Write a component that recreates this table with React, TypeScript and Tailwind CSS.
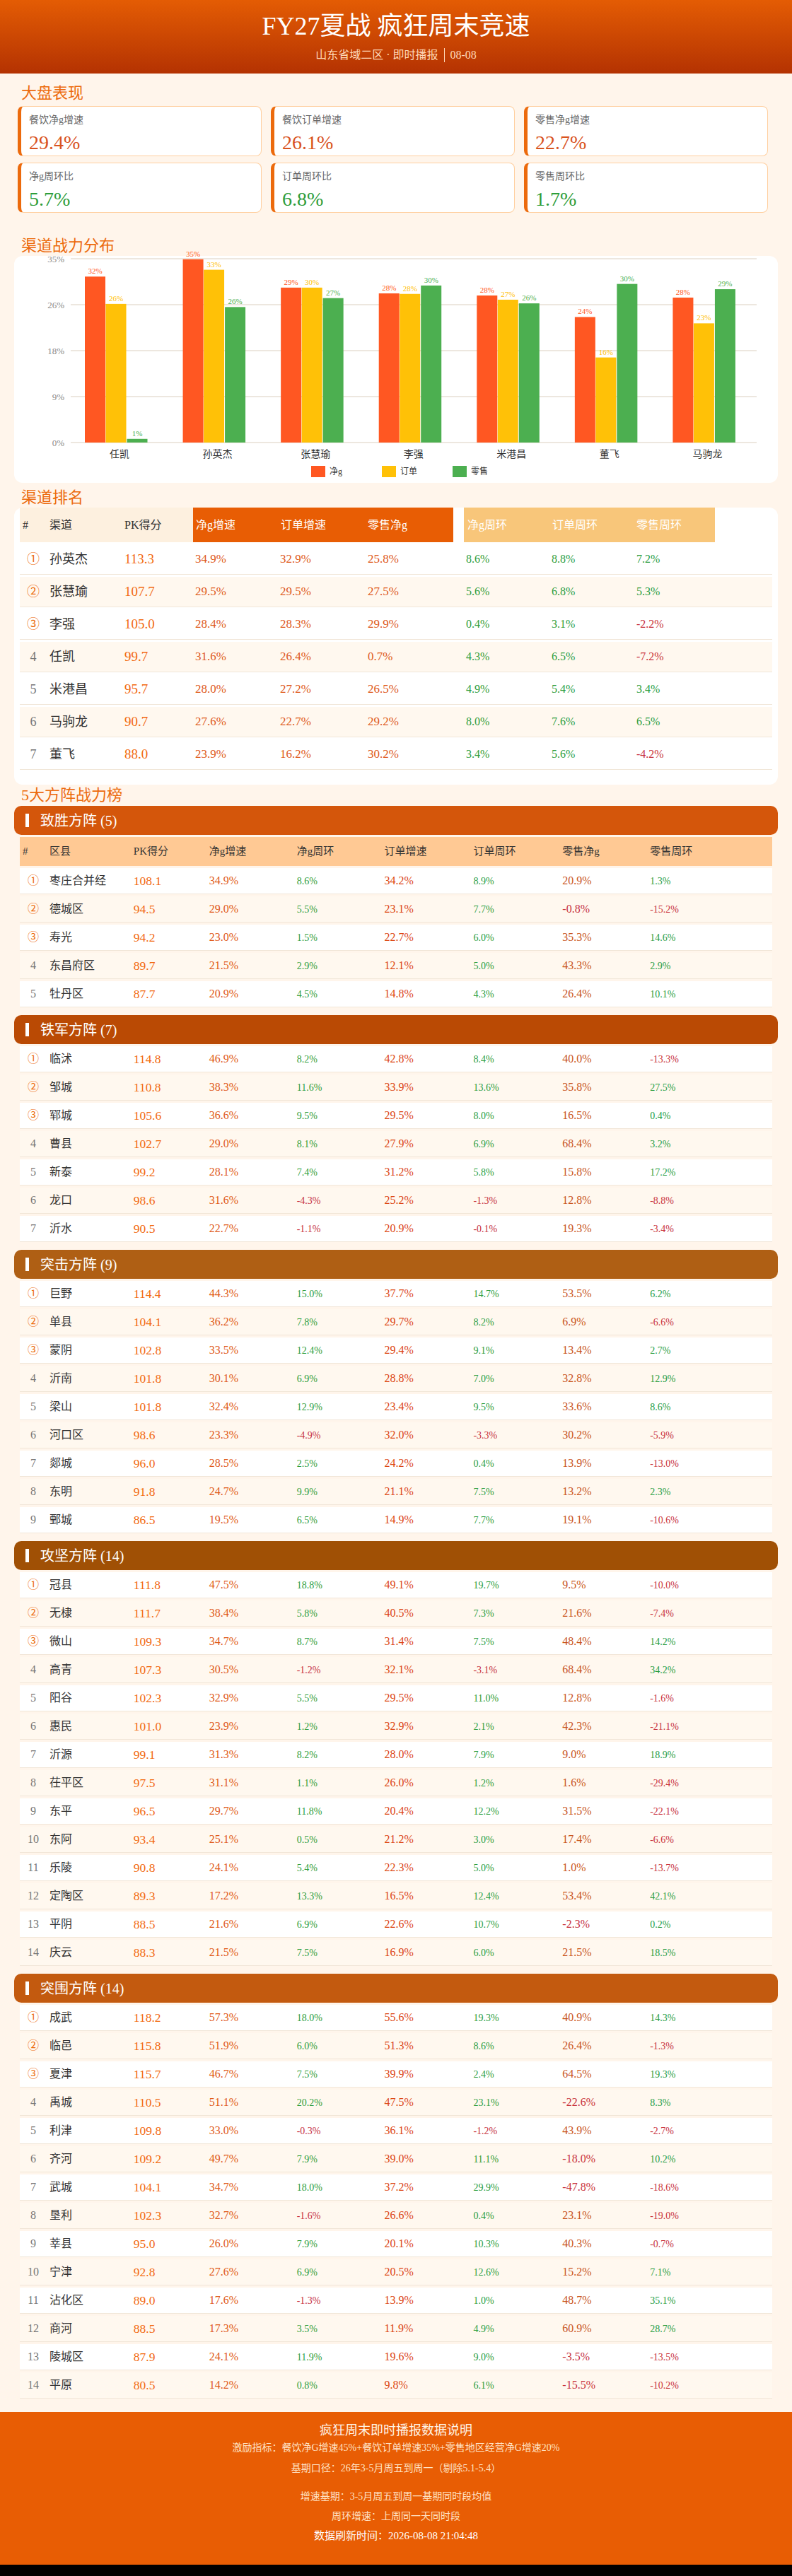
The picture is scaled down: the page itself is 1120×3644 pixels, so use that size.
import React from "react";

type SRow = [string, number, number, number, number, number, number, number];

const pct = (v: number) => `${v.toFixed(1)}%`;

const kpis: { label: string; value: string; green?: boolean }[] = [
  { label: "餐饮净g增速", value: "29.4%" },
  { label: "餐饮订单增速", value: "26.1%" },
  { label: "零售净g增速", value: "22.7%" },
  { label: "净g周环比", value: "5.7%", green: true },
  { label: "订单周环比", value: "6.8%", green: true },
  { label: "零售周环比", value: "1.7%", green: true },
];

const chartData: { name: string; v: number[]; l: string[] }[] = [
  { name: "任凯", v: [31.6, 26.4, 0.7], l: ["32%", "26%", "1%"] },
  { name: "孙英杰", v: [34.9, 32.9, 25.8], l: ["35%", "33%", "26%"] },
  { name: "张慧瑜", v: [29.5, 29.5, 27.5], l: ["29%", "30%", "27%"] },
  { name: "李强", v: [28.4, 28.3, 29.9], l: ["28%", "28%", "30%"] },
  { name: "米港昌", v: [28.0, 27.2, 26.5], l: ["28%", "27%", "26%"] },
  { name: "董飞", v: [23.9, 16.2, 30.2], l: ["24%", "16%", "30%"] },
  { name: "马驹龙", v: [27.6, 22.7, 29.2], l: ["28%", "23%", "29%"] },
];

const ranking: [string, number, number, number, number, number, number, number][] = [
  ["孙英杰", 113.3, 34.9, 32.9, 25.8, 8.6, 8.8, 7.2],
  ["张慧瑜", 107.7, 29.5, 29.5, 27.5, 5.6, 6.8, 5.3],
  ["李强", 105.0, 28.4, 28.3, 29.9, 0.4, 3.1, -2.2],
  ["任凯", 99.7, 31.6, 26.4, 0.7, 4.3, 6.5, -7.2],
  ["米港昌", 95.7, 28.0, 27.2, 26.5, 4.9, 5.4, 3.4],
  ["马驹龙", 90.7, 27.6, 22.7, 29.2, 8.0, 7.6, 6.5],
  ["董飞", 88.0, 23.9, 16.2, 30.2, 3.4, 5.6, -4.2],
];

const sections: { title: string; color: string; rows: SRow[] }[] = [
  {
    title: "致胜方阵 (5)",
    color: "bg-[#d4560b]",
    rows: [
      ["枣庄合并经", 108.1, 34.9, 8.6, 34.2, 8.9, 20.9, 1.3],
      ["德城区", 94.5, 29.0, 5.5, 23.1, 7.7, -0.8, -15.2],
      ["寿光", 94.2, 23.0, 1.5, 22.7, 6.0, 35.3, 14.6],
      ["东昌府区", 89.7, 21.5, 2.9, 12.1, 5.0, 43.3, 2.9],
      ["牡丹区", 87.7, 20.9, 4.5, 14.8, 4.3, 26.4, 10.1],
    ],
  },
  {
    title: "铁军方阵 (7)",
    color: "bg-[#ba4a04]",
    rows: [
      ["临沭", 114.8, 46.9, 8.2, 42.8, 8.4, 40.0, -13.3],
      ["邹城", 110.8, 38.3, 11.6, 33.9, 13.6, 35.8, 27.5],
      ["郓城", 105.6, 36.6, 9.5, 29.5, 8.0, 16.5, 0.4],
      ["曹县", 102.7, 29.0, 8.1, 27.9, 6.9, 68.4, 3.2],
      ["新泰", 99.2, 28.1, 7.4, 31.2, 5.8, 15.8, 17.2],
      ["龙口", 98.6, 31.6, -4.3, 25.2, -1.3, 12.8, -8.8],
      ["沂水", 90.5, 22.7, -1.1, 20.9, -0.1, 19.3, -3.4],
    ],
  },
  {
    title: "突击方阵 (9)",
    color: "bg-[#af5f14]",
    rows: [
      ["巨野", 114.4, 44.3, 15.0, 37.7, 14.7, 53.5, 6.2],
      ["单县", 104.1, 36.2, 7.8, 29.7, 8.2, 6.9, -6.6],
      ["蒙阴", 102.8, 33.5, 12.4, 29.4, 9.1, 13.4, 2.7],
      ["沂南", 101.8, 30.1, 6.9, 28.8, 7.0, 32.8, 12.9],
      ["梁山", 101.8, 32.4, 12.9, 23.4, 9.5, 33.6, 8.6],
      ["河口区", 98.6, 23.3, -4.9, 32.0, -3.3, 30.2, -5.9],
      ["郯城", 96.0, 28.5, 2.5, 24.2, 0.4, 13.9, -13.0],
      ["东明", 91.8, 24.7, 9.9, 21.1, 7.5, 13.2, 2.3],
      ["鄄城", 86.5, 19.5, 6.5, 14.9, 7.7, 19.1, -10.6],
    ],
  },
  {
    title: "攻坚方阵 (14)",
    color: "bg-[#a05005]",
    rows: [
      ["冠县", 111.8, 47.5, 18.8, 49.1, 19.7, 9.5, -10.0],
      ["无棣", 111.7, 38.4, 5.8, 40.5, 7.3, 21.6, -7.4],
      ["微山", 109.3, 34.7, 8.7, 31.4, 7.5, 48.4, 14.2],
      ["高青", 107.3, 30.5, -1.2, 32.1, -3.1, 68.4, 34.2],
      ["阳谷", 102.3, 32.9, 5.5, 29.5, 11.0, 12.8, -1.6],
      ["惠民", 101.0, 23.9, 1.2, 32.9, 2.1, 42.3, -21.1],
      ["沂源", 99.1, 31.3, 8.2, 28.0, 7.9, 9.0, 18.9],
      ["茌平区", 97.5, 31.1, 1.1, 26.0, 1.2, 1.6, -29.4],
      ["东平", 96.5, 29.7, 11.8, 20.4, 12.2, 31.5, -22.1],
      ["东阿", 93.4, 25.1, 0.5, 21.2, 3.0, 17.4, -6.6],
      ["乐陵", 90.8, 24.1, 5.4, 22.3, 5.0, 1.0, -13.7],
      ["定陶区", 89.3, 17.2, 13.3, 16.5, 12.4, 53.4, 42.1],
      ["平阴", 88.5, 21.6, 6.9, 22.6, 10.7, -2.3, 0.2],
      ["庆云", 88.3, 21.5, 7.5, 16.9, 6.0, 21.5, 18.5],
    ],
  },
  {
    title: "突围方阵 (14)",
    color: "bg-[#c35a0f]",
    rows: [
      ["成武", 118.2, 57.3, 18.0, 55.6, 19.3, 40.9, 14.3],
      ["临邑", 115.8, 51.9, 6.0, 51.3, 8.6, 26.4, -1.3],
      ["夏津", 115.7, 46.7, 7.5, 39.9, 2.4, 64.5, 19.3],
      ["禹城", 110.5, 51.1, 20.2, 47.5, 23.1, -22.6, 8.3],
      ["利津", 109.8, 33.0, -0.3, 36.1, -1.2, 43.9, -2.7],
      ["齐河", 109.2, 49.7, 7.9, 39.0, 11.1, -18.0, 10.2],
      ["武城", 104.1, 34.7, 18.0, 37.2, 29.9, -47.8, -18.6],
      ["垦利", 102.3, 32.7, -1.6, 26.6, 0.4, 23.1, -19.0],
      ["莘县", 95.0, 26.0, 7.9, 20.1, 10.3, 40.3, -0.7],
      ["宁津", 92.8, 27.6, 6.9, 20.5, 12.6, 15.2, 7.1],
      ["沾化区", 89.0, 17.6, -1.3, 13.9, 1.0, 48.7, 35.1],
      ["商河", 88.5, 17.3, 3.5, 11.9, 4.9, 60.9, 28.7],
      ["陵城区", 87.9, 24.1, 11.9, 19.6, 9.0, -3.5, -13.5],
      ["平原", 80.5, 14.2, 0.8, 9.8, 6.1, -15.5, -10.2],
    ],
  },
];

function RankMark({ i, big }: { i: number; big?: boolean }) {
  if (i < 3)
    return (
      <span className={`text-[#ec6a0c] ${big ? "text-[18px]" : "text-[16px]"}`}>
        {["①", "②", "③"][i]}
      </span>
    );
  return (
    <span className={`text-[#777] ${big ? "text-[18px]" : "text-[16px]"}`}>{i + 1}</span>
  );
}

const wowCls = (v: number) => (v < 0 ? "text-[#c8323c]" : "text-[#2e9e3e]");

function Heading({ children, className }: { children: React.ReactNode; className?: string }) {
  return (
    <div className={`h-[28px] pl-[10px] text-[22px] leading-[28px] text-[#ec6a0c] ${className ?? ""}`}>
      {children}
    </div>
  );
}

function Chart() {
  const colors = ["#ff5722", "#ffc107", "#4caf50"];
  const base = 264;
  const scale = 260 / 35;
  const ticks = [
    { y: 4, t: "35%" },
    { y: 69, t: "26%" },
    { y: 134, t: "18%" },
    { y: 199, t: "9%" },
    { y: 264, t: "0%" },
  ];
  const gw = 970 / 7;
  return (
    <svg width="1080" height="321" viewBox="0 0 1080 321" className="overflow-visible">
      {ticks.map((t) => (
        <g key={t.t}>
          <line x1="80" x2="1050" y1={t.y} y2={t.y} stroke="#e7dfd4" strokeWidth="1.5" />
          <text x="71" y={t.y + 4.5} textAnchor="end" fontSize="13" fill="#8a8a8a">
            {t.t}
          </text>
        </g>
      ))}
      {chartData.map((g, gi) => {
        const x0 = 80 + gi * gw;
        const offs = [20, 49.5, 79.5];
        return (
          <g key={g.name}>
            {g.v.map((v, bi) => {
              const h = v * scale;
              const x = x0 + offs[bi];
              return (
                <g key={bi}>
                  <rect x={x} y={base - h} width="29" height={h} fill={colors[bi]} />
                  <text
                    x={x + 14.5}
                    y={base - h - 4}
                    textAnchor="middle"
                    fontSize="11"
                    fill={colors[bi]}
                  >
                    {g.l[bi]}
                  </text>
                </g>
              );
            })}
            <text x={x0 + 69} y={285} textAnchor="middle" fontSize="14" fill="#333">
              {g.name}
            </text>
          </g>
        );
      })}
      {["净g", "订单", "零售"].map((n, i) => (
        <g key={n}>
          <rect x={420 + i * 100} y="297" width="20" height="16" fill={colors[i]} />
          <text x={446 + i * 100} y="309" fontSize="12" fill="#333">
            {n}
          </text>
        </g>
      ))}
    </svg>
  );
}

export default function App() {
  return (
    <div className="min-h-[3644px] bg-black font-['Liberation_Serif','Noto_Sans_CJK_SC',serif]">
      <div className="bg-[#fff5eb]">
        {/* Header */}
        <header className="flex h-[104px] flex-col items-center bg-gradient-to-b from-[#e45c04] to-[#b43202] pt-[17px]">
          <h1 className="h-[40px] text-[36px] leading-[40px] text-white">FY27夏战 疯狂周末竞速</h1>
          <div className="mt-[10px] flex items-center text-[16px] leading-[22px] text-[#ffd9b8]">
            <span>山东省域二区 · 即时播报</span>
            <span className="ml-[8px] h-[20px] border-l border-[#ffd9b8]" />
            <span className="ml-[8px]">08-08</span>
          </div>
        </header>

        <main className="px-5">
          <Heading className="mt-[14px]">大盘表现</Heading>
          <div className="ml-[5px] mt-[4px] grid w-[1061px] grid-cols-3 gap-x-[13px] gap-y-[9px]">
            {kpis.map((k) => (
              <div
                key={k.label}
                className="h-[71px] rounded-[8px] border border-l-[5px] border-[#ffcf9f] border-l-[#ec6a0c] bg-white pl-[11px] pt-[9px]"
              >
                <div className="text-[14px] leading-[20px] text-[#666]">{k.label}</div>
                <div
                  className={`mt-[6px] text-[28px] leading-[32px] ${
                    k.green ? "text-[#2e9d3a]" : "text-[#d9531e]"
                  }`}
                >
                  {k.value}
                </div>
              </div>
            ))}
          </div>

          <Heading className="mt-[33px]">渠道战力分布</Heading>
          <div className="h-[321px] rounded-[12px] bg-white">
            <Chart />
          </div>

          <Heading className="mt-[7px]">渠道排名</Heading>
          <div className="rounded-[12px] bg-white px-2 pb-[21px]">
            <div className="flex h-[49px] text-[16px]">
              <div className="flex w-[245px] items-center bg-[#fdf0df] text-[#333]">
                <div className="w-[38px] pl-1">#</div>
                <div className="w-[106px] pl-1">渠道</div>
                <div className="w-[101px] pl-1">PK得分</div>
              </div>
              <div className="flex w-[368px] items-center bg-[#e85d04] text-white">
                <div className="w-[120px] pl-[4px]">净g增速</div>
                <div className="w-[123px] pl-[4px]">订单增速</div>
                <div className="w-[125px] pl-[4px]">零售净g</div>
              </div>
              <div className="w-[15px]" />
              <div className="flex w-[355px] items-center bg-[#f8c67a] text-white">
                <div className="w-[120px] pl-[5px]">净g周环</div>
                <div className="w-[120px] pl-[5px]">订单周环</div>
                <div className="w-[115px] pl-[4px]">零售周环</div>
              </div>
            </div>
            {ranking.map((r, i) => (
              <div
                key={r[0]}
                className={`mt-[3px] flex h-[43px] items-center border-b border-[#f1e6d8] ${
                  i % 2 === 1 ? "bg-[#fff8ef]" : "bg-white"
                }`}
              >
                <div className="w-[38px] text-center">
                  <RankMark i={i} big />
                </div>
                <div className="w-[106px] pl-1 text-[18px] text-[#333]">{r[0]}</div>
                <div className="w-[101px] pl-1 text-[19px] text-[#f26a10]">{r[1].toFixed(1)}</div>
                <div className="w-[120px] pl-[3px] text-[17px] text-[#de5a1c]">{pct(r[2])}</div>
                <div className="w-[123px] pl-[3px] text-[17px] text-[#de5a1c]">{pct(r[3])}</div>
                <div className="w-[125px] pl-[4px] text-[17px] text-[#de5a1c]">{pct(r[4])}</div>
                <div className="w-[15px]" />
                <div className={`w-[120px] pl-[3px] text-[16px] ${wowCls(r[5])}`}>{pct(r[5])}</div>
                <div className={`w-[120px] pl-[4px] text-[16px] ${wowCls(r[6])}`}>{pct(r[6])}</div>
                <div className={`w-[115px] pl-[4px] text-[16px] ${wowCls(r[7])}`}>{pct(r[7])}</div>
              </div>
            ))}
          </div>

          <Heading className="mt-[1px]">5大方阵战力榜</Heading>
          {sections.map((s, si) => (
            <div key={s.title} className={si === 0 ? "mt-[1px]" : "mt-[11px]"}>
              <div className={`flex h-[41px] items-center rounded-[10px] ${s.color}`}>
                <span className="ml-4 h-[19px] w-[5px] bg-white" />
                <span className="ml-[16px] text-[20px] text-white">{s.title}</span>
              </div>
              <div className="mx-2">
                {si === 0 && (
                  <div className="mt-[3px] flex h-[41px] items-center bg-[#ffc994] text-[15px] text-[#333]">
                    <div className="w-[38px] pl-1">#</div>
                    <div className="w-[119px] pl-1">区县</div>
                    <div className="w-[107px] pl-1">PK得分</div>
                    <div className="w-[124px] pl-1">净g增速</div>
                    <div className="w-[124px] pl-1">净g周环</div>
                    <div className="w-[126px] pl-1">订单增速</div>
                    <div className="w-[126px] pl-1">订单周环</div>
                    <div className="w-[124px] pl-1">零售净g</div>
                    <div className="w-[177px] pl-1">零售周环</div>
                  </div>
                )}
                {s.rows.map((r, i) => (
                  <div
                    key={r[0]}
                    className={`mt-[3px] flex h-[37px] items-center border-b border-[#f1e6d8] ${
                      i % 2 === 1 ? "bg-[#fff8ef]" : "bg-white"
                    }`}
                  >
                    <div className="w-[38px] text-center">
                      <RankMark i={i} />
                    </div>
                    <div className="w-[119px] pl-1 text-[16px] text-[#333]">{r[0]}</div>
                    <div className="w-[107px] pl-1 text-[17.5px] text-[#f26a10]">{r[1].toFixed(1)}</div>
                    <div className="w-[124px] pl-1 text-[16px] text-[#e05a1a]">{pct(r[2])}</div>
                    <div className={`w-[124px] pl-1 text-[14px] ${wowCls(r[3])}`}>{pct(r[3])}</div>
                    <div className="w-[126px] pl-1 text-[16px] text-[#dc4612]">{pct(r[4])}</div>
                    <div className={`w-[126px] pl-1 text-[14px] ${wowCls(r[5])}`}>{pct(r[5])}</div>
                    <div
                      className={`w-[124px] pl-1 text-[16px] ${
                        r[6] < 0 ? "text-[#c8323c]" : "text-[#c9551c]"
                      }`}
                    >
                      {pct(r[6])}
                    </div>
                    <div className={`w-[177px] pl-1 text-[14px] ${wowCls(r[7])}`}>{pct(r[7])}</div>
                  </div>
                ))}
              </div>
            </div>
          ))}
        </main>

        <footer className="mt-[19px] flex h-[216px] flex-col items-center bg-[#e85d04] pt-[14px] text-[#ffe3c6]">
          <div className="text-[18px] leading-[24px] text-[#fff3e6]">疯狂周末即时播报数据说明</div>
          <div className="mt-[1px] text-[14px] leading-[24px]">
            激励指标：餐饮净G增速45%+餐饮订单增速35%+零售地区经营净G增速20%
          </div>
          <div className="mt-[5px] text-[14px] leading-[24px]">基期口径：26年3-5月周五到周一（剔除5.1-5.4）</div>
          <div className="mt-[16px] text-[14px] leading-[24px]">增速基期：3-5月周五到周一基期同时段均值</div>
          <div className="mt-[4px] text-[14px] leading-[24px]">周环增速：上周同一天同时段</div>
          <div className="mt-[3px] text-[15px] leading-[24px] text-white">数据刷新时间：2026-08-08 21:04:48</div>
        </footer>
      </div>
    </div>
  );
}
